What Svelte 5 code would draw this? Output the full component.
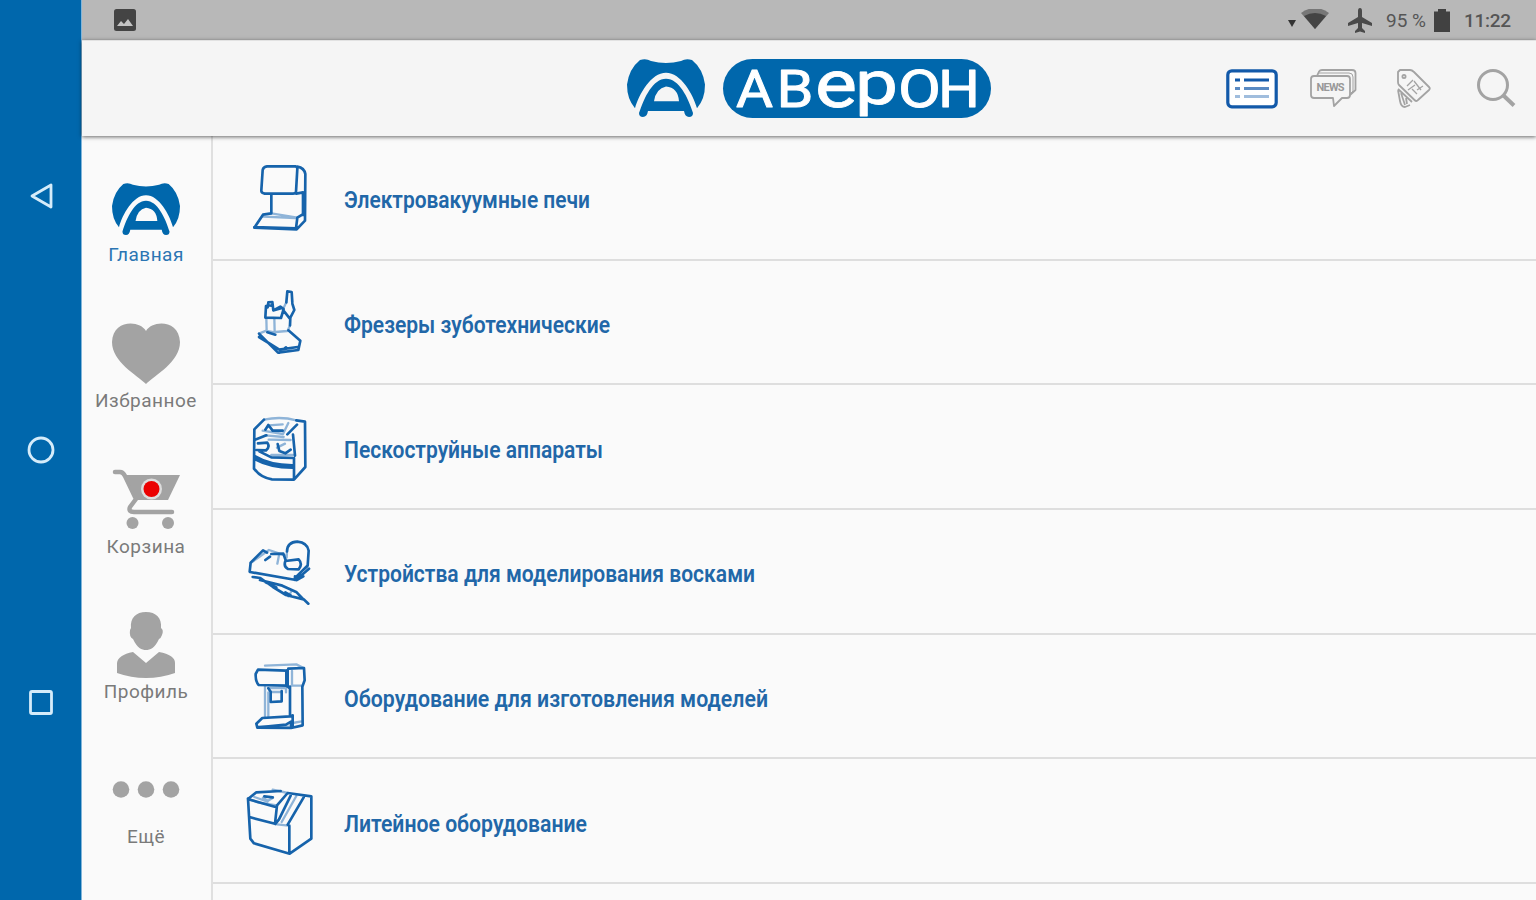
<script lang="ts">
  const blue = '#0067ac';

  // Wordmark letters: baseline, size and width are tuned per glyph
  const letters = [
    { ch: 'А', x: 13, y: 48, size: 52, w: 37, bold: 0.9 },
    { ch: 'В', x: 53.5, y: 48, size: 52, w: 37, bold: 0.9 },
    { ch: 'е', x: 92, y: 47.5, size: 66, w: 42, bold: 0.8 },
    { ch: 'р', x: 132, y: 44.5, size: 62, w: 43, bold: 0.8 },
    { ch: 'О', x: 175, y: 48, size: 52, w: 43, bold: 0.9 },
    { ch: 'Н', x: 215, y: 48, size: 52, w: 42, bold: 0.9 }
  ];

  const menu = [
    { id: 'home', label: 'Главная' },
    { id: 'favorites', label: 'Избранное' },
    { id: 'cart', label: 'Корзина' },
    { id: 'profile', label: 'Профиль' },
    { id: 'more', label: 'Ещё' }
  ];

  let active = $state('home');

  const categories = [
    {
      title: 'Электровакуумные печи',
      width: 246,
      top: 6,
      main: 'M96 49 H181 Q187 50 187 56 L183 126 Q181 131 174 131 H89 Q78 129 79 121 L83 60 Q85 50 96 49 Z M187 50 Q208 54 211 72 L210 212 L185 238 L58 233 L84 194 L109 190 V132 M58 231 L183 235 L187 203 L208 190 M184 131 L204 127 M204 127 V195',
      soft: 'M109 190 L187 203 M84 200 L181 204'
    },
    {
      title: 'Фрезеры зуботехнические',
      width: 266,
      top: 4,
      main: 'M93 91 L91 126 L138 127 L146 100 L136 93 L115 104 L112 79 L100 80 L98 95 M98 88 L113 91 M117 104 L141 97 M154 80 L157 47 L170 49 L172 80 M172 84 L178 103 L166 126 L165 149 M145 104 L164 128 M72 174 L129 231 L190 223 L196 195 L160 164 M72 184 L133 222 L188 214 M97 170 L121 177 M133 231 L153 215',
      soft: 'M94 128 L95 166 L119 170 L118 128 M72 174 L94 165 M121 169 L156 166 M154 80 L144 101 M165 149 L158 165'
    },
    {
      title: 'Пескоструйные аппараты',
      width: 259,
      top: -10,
      main: 'M58 73 L57 190 Q78 218 111 222 L177 223 L211 185 L210 49 L184 45 M58 72 L87 43 M91 73 L100 59 L113 76 L143 76 M58 104 L94 90 M157 87 L186 58 M174 88 L180 151 M58 152 Q106 181 176 180 M58 161 Q106 188 177 187 M177 158 V222 M65 134 L93 135 Q106 125 97 112 L69 114 M128 116 L133 137 L151 144 L167 133 M73 138 L109 156 L177 158',
      soft: 'M87 43 Q137 32 184 45 M83 76 L144 86 L160 53 M101 60 L143 57 M101 103 L167 104 M126 127 L150 115 M109 149 H174 M91 90 L146 95'
    },
    {
      title: 'Устройства для моделирования восками',
      width: 411,
      top: -12,
      main: 'M44 125 L47 98 L84 61 L96 68 M45 126 L183 150 L222 116 M91 90 L105 80 M109 72 L145 71 L151 88 M151 93 Q145 111 159 117 L191 118 Q204 102 191 88 Z M156 64 Q157 36 187 35 Q217 38 221 62 L218 106 L184 140 M53 141 L76 144 L114 171 L153 195 L206 208 L220 221 M75 150 L142 167 L185 187 L204 207 M92 157 L124 172 M151 187 L168 197 M204 120 L217 109 M180 139 V150 M185 150 L205 139',
      soft: 'M47 99 L102 60 L150 76 M156 65 L155 83 M132 76 L127 101 M170 183 L160 199'
    },
    {
      title: 'Оборудование для изготовления моделей',
      width: 424,
      top: -13,
      main: 'M69 43 L154 46 V91 L71 89 Q61 79 62 56 Z M160 40 L207 38 L209 75 L202 94 L203 210 L168 218 L67 217 L64 205 L82 188 L165 183 V94 M154 91 L164 99 M158 44 V94 M100 99 L107 109 M107 110 V140 L140 138 V107 M71 216 L153 208 L168 199 V217 M163 183 L173 181 M173 180 V211',
      soft: 'M90 31 L184 27 L206 38 M90 94 V185 M99 98 H153 V111 M109 110 H139 M171 47 V91 H202 M173 203 L200 198 M100 185 V111 M67 214 H161'
    },
    {
      title: 'Литейное оборудование',
      width: 243,
      top: 2,
      main: 'M39 70 L46 190 L57 204 L164 235 L229 190 V63 L158 53 L126 90 L120 145 L46 126 M39 71 L64 51 L137 47 M167 61 L132 132 L121 146 M158 148 L206 66 M163 151 V234 M88 63 L113 66 M45 73 L119 94',
      soft: 'M39 70 L71 82 L126 90 M158 53 L113 43 M126 147 L160 151 M58 65 L98 79 M114 67 L99 76 L84 67 M184 62 L140 140'
    }
  ];
</script>

<!-- brand sign, shared by the header and the side menu -->
{#snippet sign(cls: string)}
  <svg class={cls} viewBox="0 0 78 60" preserveAspectRatio="none">
    <path
      fill={blue}
      d="M13 1 Q19 -1 24 2 Q39 6 54 2 Q59 -1 65 1 Q76 10 78 26 Q78 41 70 50 C66 36 54 14 39 14 C24 14 12 36 8 50 Q0 41 0 26 Q2 10 13 1 Z"
    />
    <path
      fill={blue}
      fill-rule="evenodd"
      d="M12 55 C17 39 26 20 39 20 C52 20 61 39 66 55 Q66 59 62 59 Q58 59 57 53 H21 Q20 59 16 59 Q12 59 12 55 Z M27 43 H52 Q51 29 39 28 Q29 30 27 43 Z"
    />
  </svg>
{/snippet}

<div class="screen">
  <nav class="system-nav">
    <svg width="26" height="28" viewBox="0 0 26 28">
      <path d="M23 3 V25 L4 14 Z" />
    </svg>
    <svg width="30" height="30" viewBox="0 0 30 30">
      <circle cx="15" cy="16" r="12" />
    </svg>
    <svg width="28" height="28" viewBox="0 0 28 28">
      <rect x="3.5" y="3.5" width="21" height="22" rx="1.5" />
    </svg>
  </nav>

  <div class="app">
    <div class="status">
      <svg class="photo" width="22" height="22" viewBox="0 0 22 22">
        <rect width="22" height="22" rx="2.5" fill="#444" />
        <path d="M3 17 L7 12 L10 15 L14 10 L19 17 Z" fill="#c4c4c4" />
      </svg>
      <svg width="42" height="22" viewBox="0 0 42 22">
        <path d="M0 11 H8 L4 18 Z" fill="#333" />
        <path d="M13 4 Q27 -6 41 4 L27 20 Z" fill="#777" />
        <path d="M16 7 Q27 1 38 7 L27 20 Z" fill="#444" />
      </svg>
      <svg class="plane" width="24" height="25" viewBox="0 0 24 25">
        <path
          d="M12 0 Q14 0 14 3 V9 L24 15 V18 L14 15 V20 L17 23 V25 L12 23.5 L7 25 V23 L10 20 V15 L0 18 V15 L10 9 V3 Q10 0 12 0 Z"
          fill="#4a4a4a"
        />
      </svg>
      <span class="percent">95 %</span>
      <svg class="battery" width="16" height="23" viewBox="0 0 16 23">
        <path d="M0 2.5 H4 V0 H12 V2.5 H16 V23 H0 Z" fill="#414141" />
      </svg>
      <span class="clock">11:22</span>
    </div>

    <header>
      <div class="brand">
        {@render sign('brand-sign')}
        <svg class="wordmark" width="268" height="59" viewBox="0 0 268 59">
          <rect width="268" height="59" rx="29.5" fill={blue} />
          {#each letters as l}
            <text
              x={l.x}
              y={l.y}
              font-size={l.size}
              stroke-width={l.bold}
              textLength={l.w}
              lengthAdjust="spacingAndGlyphs">{l.ch}</text
            >
          {/each}
        </svg>
      </div>

      <div class="tools">
        <svg width="52" height="40" viewBox="0 0 52 40" class="tool-list">
          <rect x="1.8" y="1.8" width="48.4" height="36" rx="4" fill="#fff" />
          <path d="M9 11 H14 M18 11 H43" />
          <path d="M9 19.5 H14 M18 19.5 H43" opacity="0.7" />
          <path d="M9 27.5 H14 M18 27.5 H43" opacity="0.4" />
        </svg>
        <svg width="47" height="39" viewBox="0 0 47 39" class="tool">
          <path d="M7 7 L9 2.5 Q10 1 12 1 H42 Q45.5 1 45.5 4 V21 L40 26" />
          <path
            d="M4 7 H37 Q40 7 40 10 V26 Q40 29 37 29 H32 L24 37 L23 29 H4 Q1 29 1 26 V10 Q1 7 4 7 Z"
          />
          <path d="M9 4 H39 Q43 4 43 8 V22 L40 25" stroke-width="1" />
          <text x="6.5" y="22" textLength="28">NEWS</text>
        </svg>
        <svg width="36" height="40" viewBox="0 0 36 40" class="tool">
          <path
            d="M4 1 H14 Q16 1 18 3 L33 18 Q34.5 19.5 33 21 L22 31 Q20.5 33 18.5 31 L3 16 Q2 15 2 13 V3 Z"
          />
          <circle cx="8" cy="7.5" r="1.6" />
          <path
            d="M2 21 L4 32 Q5 38 9 38 L14 36 M2 20 L16 33 M5 24 L9 36 M10 29 L11 35"
          />
          <path
            d="M11 17 L17 11 M12 21 L19 16 M16 20 L21 25 M18 12 L25 21 M21 21 L27 17"
            stroke-width="1.3"
          />
        </svg>
        <svg width="40" height="40" viewBox="0 0 40 40" class="tool search">
          <circle cx="17" cy="16" r="14.5" />
          <path d="M27.5 26.5 L38 36.5" stroke-width="4" />
        </svg>
      </div>
    </header>

    <div class="body">
      <aside>
        {#each menu as item}
          <button
            class="item"
            class:active={active === item.id}
            onclick={() => (active = item.id)}
          >
            {#if item.id === 'home'}
              {@render sign('menu-sign')}
            {:else}
              <svg class="menu-icon" viewBox="0 0 68 68">
                {#if item.id === 'favorites'}
                  <path
                    d="M34 10 C40 -1 67 -2 68 21 C68 41 43 54 34 63 C25 54 0 41 0 21 C1 -2 28 -1 34 10 Z"
                  />
                {:else if item.id === 'cart'}
                  <path
                    d="M3 5 H8 Q11 5 13 9 L24 32 L18 40 Q16 45 22 45 H60"
                    class="line"
                  />
                  <path d="M14 8 H68 L56 33 H25 Z" />
                  <circle cx="20.5" cy="56" r="6" />
                  <circle cx="56" cy="56" r="6" />
                  <circle cx="39.500" cy="22" r="10.5" fill="#ddd" />
                  <circle cx="39.500" cy="22" r="8" fill="#eb0000" />
                {:else if item.id === 'profile'}
                  <path
                    d="M34 0 C44 0 50 6 49 16 Q52 18 50 23 Q49 26 47 27 C43 36 38 38 34 38 C30 38 25 36 21 27 Q17 25 18 18 L19 16 C18 6 24 0 34 0 Z"
                  />
                  <path
                    d="M21 40 L34 51 L47 40 Q63 43 63 51 V61 Q49 66 34 66 Q19 66 5 61 V51 Q6 43 21 40 Z"
                  />
                {:else}
                  <circle cx="9" cy="32.5" r="8.3" />
                  <circle cx="34" cy="32.5" r="8.3" />
                  <circle cx="59" cy="32.5" r="8.3" />
                {/if}
              </svg>
            {/if}
            <span>{item.label}</span>
          </button>
        {/each}
      </aside>

      <main>
        {#each categories as c}
          <div class="row">
            <svg
              class="device"
              width="90"
              height="90"
              viewBox={`0 ${c.top} 270 270`}
            >
              <path d={c.soft} class="soft" />
              <path d={c.main} />
            </svg>
            <svg class="title" width={c.width + 4} height="40">
              <text
                x="0"
                y="30.5"
                textLength={c.width}
                lengthAdjust="spacingAndGlyphs">{c.title}</text
              >
            </svg>
          </div>
        {/each}
      </main>
    </div>
  </div>
</div>

<style>
  :global(body) {
    overflow: hidden;
    background: #fafafa;
  }

  .screen {
    display: flex;
    width: 100vw;
    height: 100vh;
    font-family: Roboto, 'Noto Sans', sans-serif;
    overflow: hidden;
  }

  svg {
    display: block;
    flex: none;
  }

  .system-nav {
    box-sizing: border-box;
    width: 82px;
    height: 900px;
    padding: 182px 0 184px;
    display: flex;
    flex-direction: column;
    align-items: center;
    justify-content: space-between;
    background: #0067ac;
    border-right: 1px solid #82b5d9;
  }

  .system-nav svg {
    fill: none;
    stroke: #d5ecfa;
    stroke-width: 2.8;
    stroke-linejoin: round;
  }

  .app {
    flex: 1;
    min-width: 0;
    display: flex;
    flex-direction: column;
  }

  .status {
    box-sizing: border-box;
    height: 40px;
    padding: 0 25px 0 32px;
    display: flex;
    align-items: center;
    background: #b8b8b8;
    color: #555;
  }

  .photo {
    margin-right: auto;
  }

  .plane {
    margin: 0 14px 0 18px;
  }

  .percent {
    width: 39px;
    font-size: 19px;
    white-space: nowrap;
  }

  .battery {
    margin: 0 14px 0 9px;
  }

  .clock {
    width: 47px;
    font-weight: 500;
    font-size: 19px;
    letter-spacing: -0.3px;
  }

  header {
    box-sizing: border-box;
    position: relative;
    height: 96px;
    padding: 0 20px 0 545px;
    display: flex;
    align-items: center;
    justify-content: space-between;
    background: #f5f5f5;
    border-top: 1px solid #e2e2e2;
    box-shadow: 0 1px 4px rgba(0, 0, 0, 0.6);
  }

  .brand {
    display: flex;
    align-items: center;
    gap: 18px;
  }

  .brand :global(.brand-sign) {
    width: 78px;
    height: 59px;
  }

  .wordmark {
    overflow: visible;
  }

  .wordmark text {
    fill: #fff;
    stroke: #fff;
    stroke-linejoin: round;
  }

  .tools {
    display: flex;
    align-items: center;
  }

  .tool {
    fill: none;
    stroke: #a3a3a3;
    stroke-width: 1.8;
    stroke-linejoin: round;
    margin-left: 32px;
  }

  .tool + .tool {
    margin-left: 39px;
  }

  .tool + .search {
    margin-left: 44px;
    stroke-width: 3;
  }

  .tool text {
    font-size: 11px;
    font-weight: 700;
    fill: #999;
    stroke: none;
  }

  .tool-list {
    stroke: #1259a9;
    stroke-width: 3.2;
    fill: none;
  }

  .body {
    flex: 1;
    min-height: 0;
    display: flex;
    background: #fafafa;
  }

  aside {
    box-sizing: border-box;
    width: 131px;
    padding-top: 38px;
    border-right: 2px solid #e0e0e0;
  }

  .item {
    box-sizing: border-box;
    width: 100%;
    height: 145.3px;
    padding: 0 1px 0 0;
    border: 0;
    background: none;
    display: flex;
    flex-direction: column;
    align-items: center;
    font: 400 19px/24px Roboto, sans-serif;
    letter-spacing: 0.5px;
    color: #7a7a7a;
  }

  .item.active {
    color: #2b75b3;
  }

  .item :global(.menu-sign) {
    width: 68px;
    height: 53px;
    margin: 9px 0 7px;
  }

  .menu-icon {
    width: 68px;
    height: 68px;
    margin-top: 2px;
    fill: #a3a3a3;
  }

  .line {
    fill: none;
    stroke: #a3a3a3;
    stroke-width: 4.5;
    stroke-linecap: round;
    stroke-linejoin: round;
  }

  main {
    flex: 1;
  }

  .row {
    box-sizing: border-box;
    height: 124.7px;
    padding-left: 22px;
    display: flex;
    align-items: center;
    border-bottom: 2px solid #dedede;
  }

  .device {
    fill: none;
    stroke: #1663ab;
    stroke-width: 8;
    stroke-linejoin: round;
    stroke-linecap: round;
  }

  .soft {
    stroke: #8fb4d8;
    stroke-width: 7;
  }

  .title {
    margin-left: 19px;
    overflow: visible;
    font-size: 23px;
    font-weight: 600;
    fill: #2167a8;
  }
</style>
